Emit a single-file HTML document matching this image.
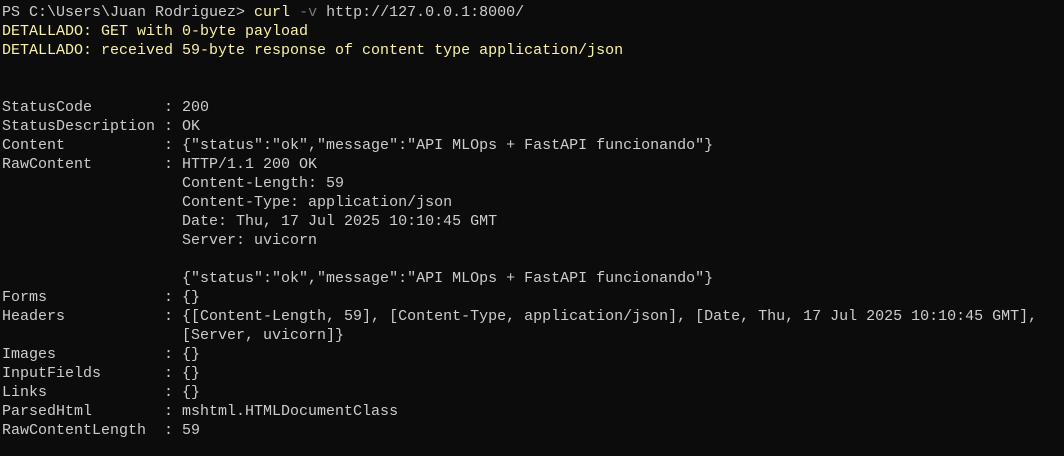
<!DOCTYPE html>
<html><head><meta charset="utf-8"><style>
html,body{margin:0;padding:0;background:#0c0c0c;width:1064px;height:456px;overflow:hidden}
pre{margin:0;padding:3px 0 0 2px;font-family:"Liberation Mono",monospace;font-size:15px;line-height:19px;color:#cccccc;white-space:pre}
.y{color:#f9f1a5}.g{color:#767676}
</style></head><body><pre>PS C:\Users\Juan Rodriguez&gt; <span class="y">curl</span> <span class="g">-v</span> http://127.0.0.1:8000/
<span class="y">DETALLADO: GET with 0-byte payload</span>
<span class="y">DETALLADO: received 59-byte response of content type application/json</span>


StatusCode        : 200
StatusDescription : OK
Content           : {"status":"ok","message":"API MLOps + FastAPI funcionando"}
RawContent        : HTTP/1.1 200 OK
                    Content-Length: 59
                    Content-Type: application/json
                    Date: Thu, 17 Jul 2025 10:10:45 GMT
                    Server: uvicorn

                    {"status":"ok","message":"API MLOps + FastAPI funcionando"}
Forms             : {}
Headers           : {[Content-Length, 59], [Content-Type, application/json], [Date, Thu, 17 Jul 2025 10:10:45 GMT],
                    [Server, uvicorn]}
Images            : {}
InputFields       : {}
Links             : {}
ParsedHtml        : mshtml.HTMLDocumentClass
RawContentLength  : 59
</pre></body></html>
